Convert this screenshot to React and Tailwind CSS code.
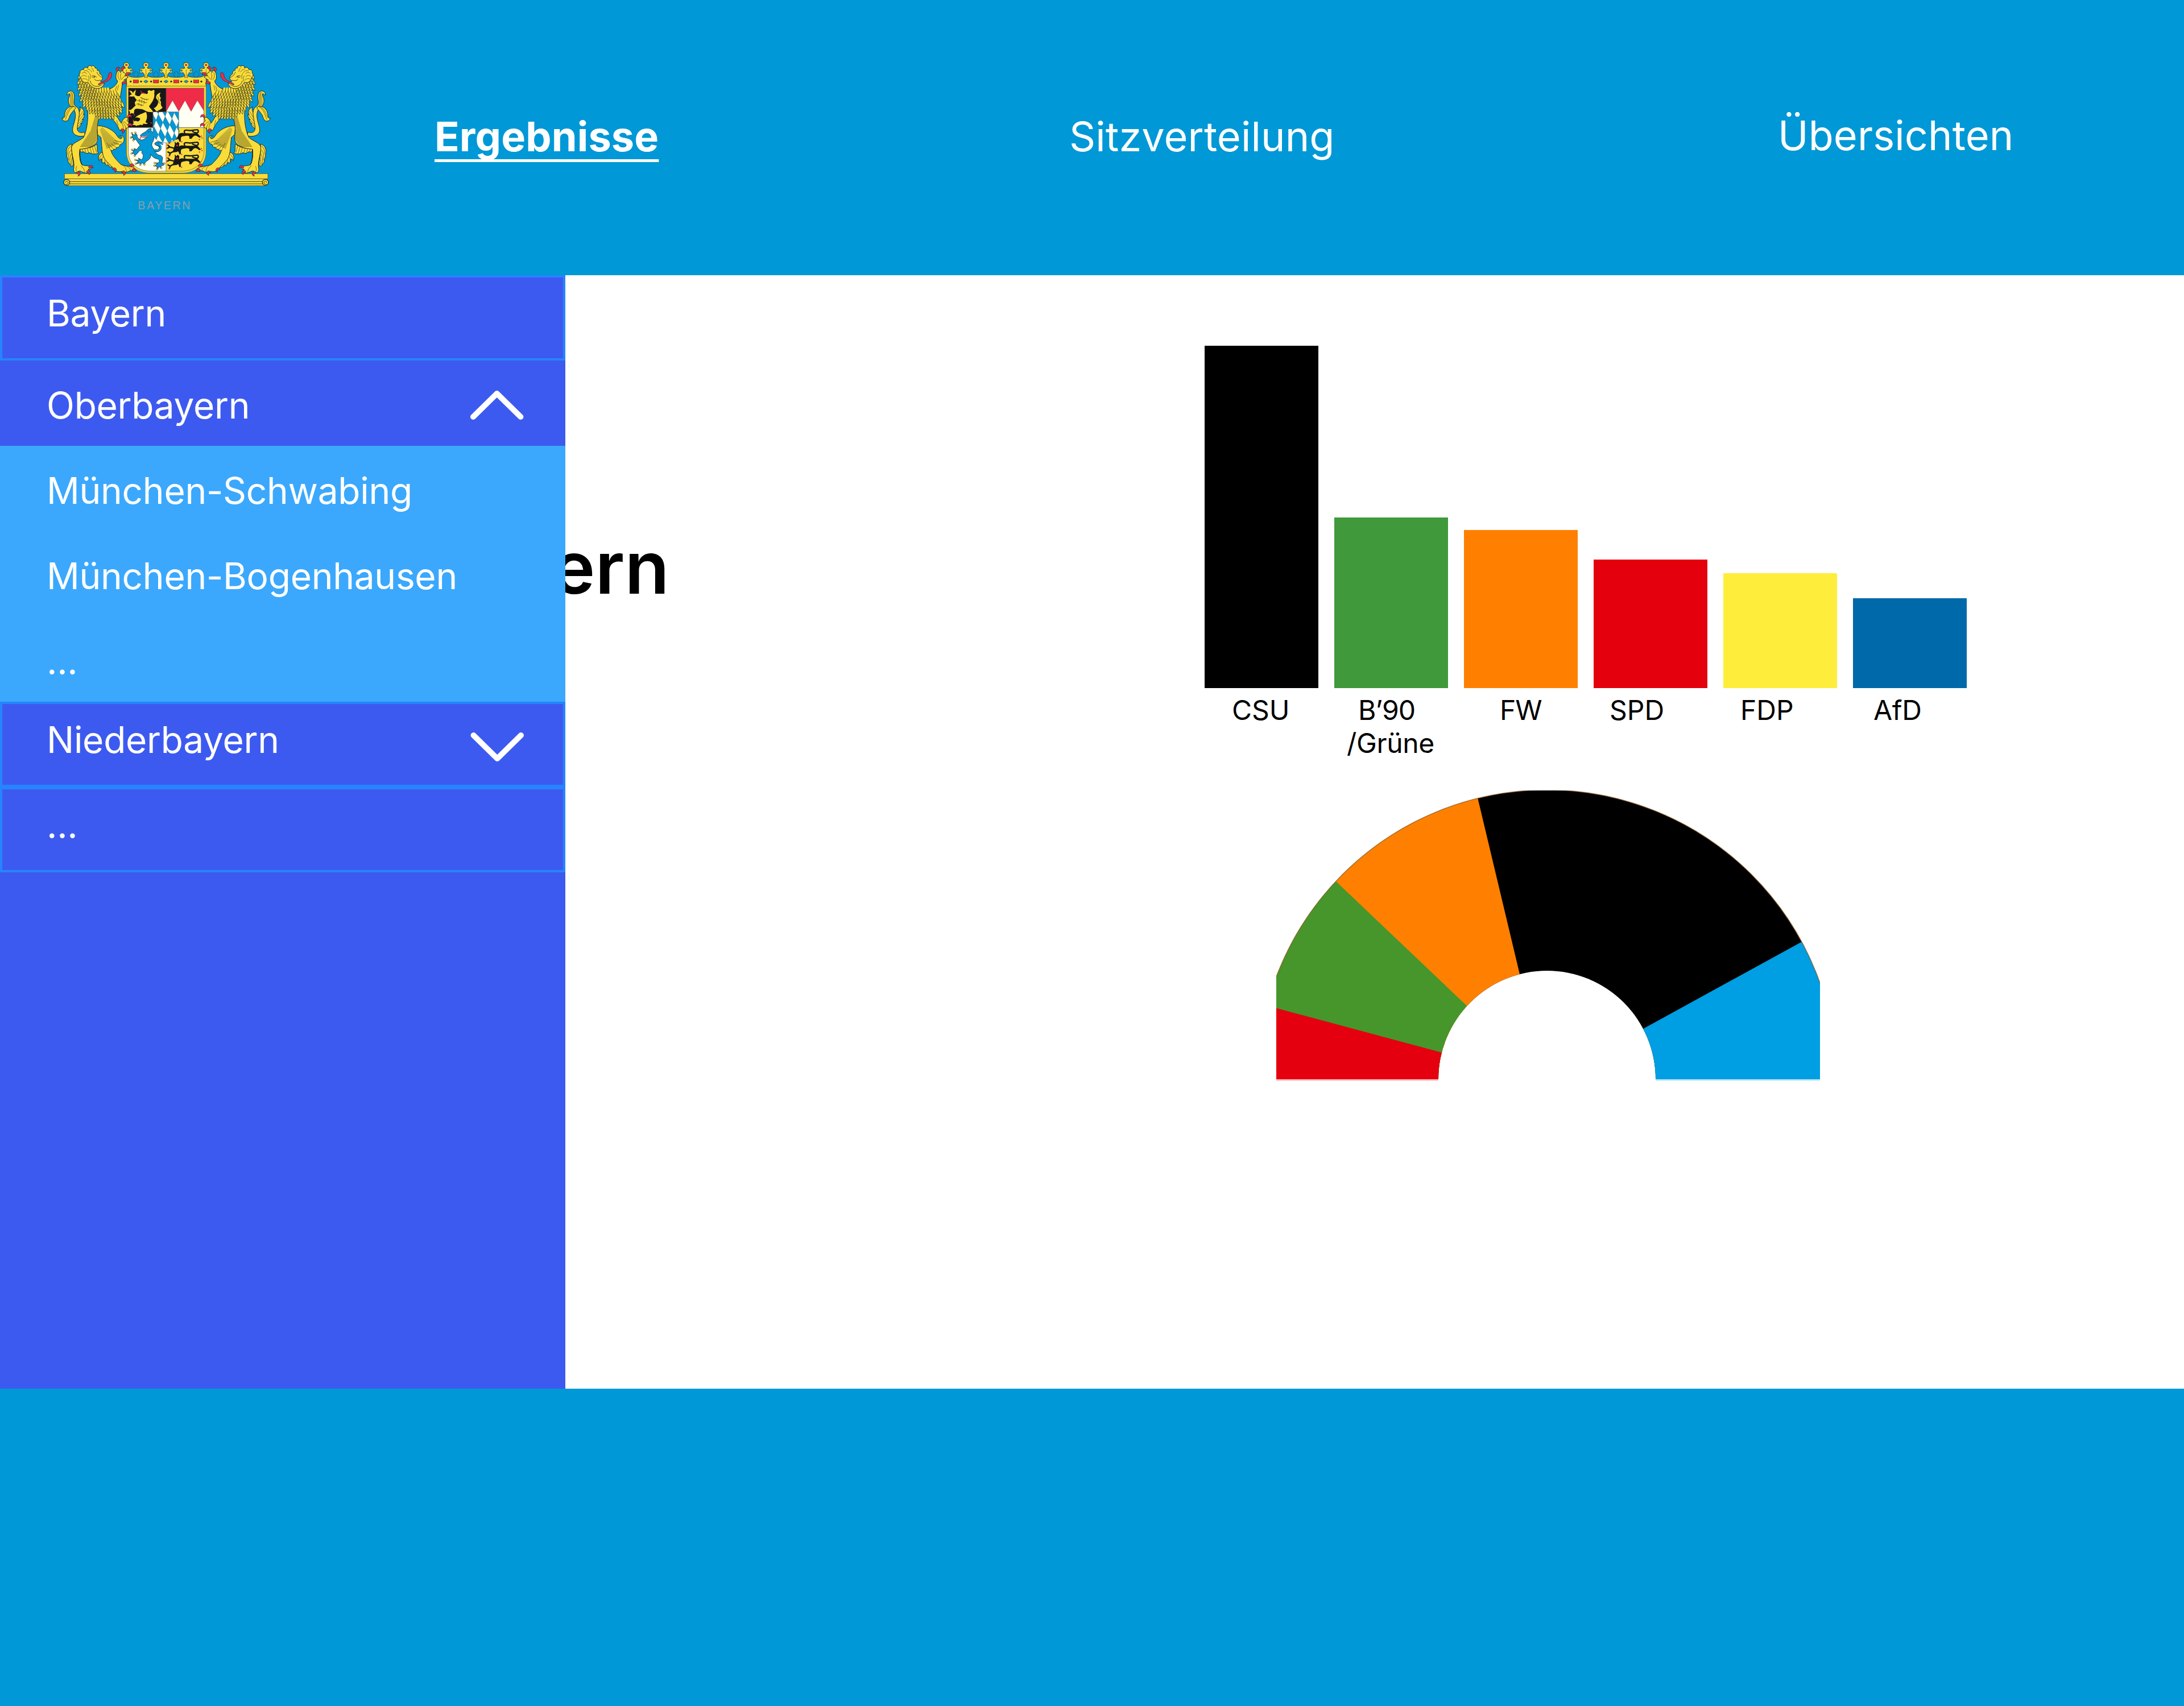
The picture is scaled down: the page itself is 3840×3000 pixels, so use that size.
import React from "react";

const GOLD = "#f9dc3a";
const INK = "#23271f";
const RED = "#f02b48";
const BLUE = "#0098d6";
const IVORY = "#fffff4";

const lerpTable = (table, y) => {
  for (let i = 1; i < table.length; i++) {
    const [y0, v0] = table[i - 1];
    const [y1, v1] = table[i];
    if (y <= y1) return v0 + ((v1 - v0) * (y - y0)) / (y1 - y0);
  }
  return table[table.length - 1][1];
};

const MANE_LEFT = [[70, 114], [120, 108], [160, 114], [200, 122], [240, 142], [262, 172], [290, 212]];
const MANE_RIGHT = [[70, 130], [120, 165], [138, 195], [150, 248], [170, 302], [200, 318], [235, 330], [262, 318], [290, 285]];

const TUFTS = (() => {
  const out = [];
  let row = 0;
  for (let y = 288; y >= 66; y -= 15) {
    const l = lerpTable(MANE_LEFT, y);
    const r = lerpTable(MANE_RIGHT, y);
    for (let x = l + (row % 2) * 7; x <= r; x += 13.5) {
      const t = (x - 110) / 220;
      out.push([x, y, 38 - t * 68]);
    }
    row++;
  }
  return out;
})();

function Claw({ x, y, a }) {
  return (
    <path
      transform={`translate(${x} ${y}) rotate(${a})`}
      d="M-7 0 C-7 -9 0 -13 10 -10 C14 -8 16 -3 16 3 C10 -3 4 -2 1 5 C-3 7 -7 5 -7 0Z"
      fill={RED}
      stroke={INK}
      strokeWidth="2"
    />
  );
}

function Supporter() {
  const body = { fill: GOLD, stroke: INK, strokeWidth: 3, strokeLinejoin: "round" };
  const line = { fill: "none", stroke: INK, strokeWidth: 1.8, strokeLinecap: "round" };
  return (
    <g transform="translate(45 45)">
      <path {...body} d="M106 248 C128 262 132 275 124 290 L131 288 C129 305 123 311 117 316 L125 315 C119 330 111 335 109 338 L115 338 C109 352 99 360 90 364 C86 340 96 310 102 282 C106 268 112 262 106 248Z" />
      <path {...line} d="M122 272 L101 306 M125 292 L98 324 M119 316 L94 342 M110 338 L91 356" />
      <path {...body} d="M132 402 C100 408 72 400 68 375 C66 350 84 325 83 290 C81 270 75 258 62 250 C45 238 42 215 50 195 C54 185 56 182 50 180 C44 180 44 188 38 186 C37 170 52 162 64 166 C78 172 80 195 76 215 C74 235 78 242 88 248 C104 258 106 280 100 310 C96 340 88 360 96 376 C102 386 118 386 132 382Z" />
      <path {...body} d="M78 248 C48 240 30 262 26 285 C24 300 24 312 12 308 C14 320 28 328 40 322 C52 312 50 295 60 285 C68 272 80 262 84 254Z" />
      <path {...line} d="M70 250 C46 262 42 290 30 316 M64 250 C40 260 36 285 26 305 M58 172 C70 190 58 215 66 246 M64 172 C74 195 66 220 72 244 M52 178 C62 200 52 220 58 240" />

      <path {...body} d="M225 488 C205 495 200 515 208 532 C212 528 216 520 222 525 C218 540 224 548 230 545 C236 535 238 545 240 552 C248 562 255 550 258 558 C262 566 268 570 276 566 C262 545 235 520 225 488Z" />
      <path {...line} d="M222 500 C214 508 210 518 210 526 M228 512 C222 520 222 532 226 542 M238 526 C236 535 240 545 244 552 M250 542 C250 550 258 558 264 564" />
      <path {...body} d="M196 348 C245 348 285 372 305 405 C315 420 330 420 328 408 C324 400 314 410 314 402 C322 396 340 402 340 420 C338 445 322 444 316 450 C320 462 304 462 298 464 C300 474 290 472 284 472 C284 482 276 478 270 478 C276 505 300 530 322 552 C345 566 385 556 400 578 C404 590 395 592 388 588 C378 584 368 586 362 590 C356 594 350 590 344 594 C340 606 326 602 328 590 C310 592 292 590 286 578 C280 565 250 545 235 520 C222 495 222 450 218 410 L200 395Z" />
      {Array.from({ length: 18 }, (_, i) => (
        <path key={i} {...line} d={`M${214 + i * 2} ${372 + i * 5.6} L${226 + i * 5} ${358 + i * 4.8}`} />
      ))}
      <path {...line} d="M250 440 C258 452 262 465 268 478 M262 448 L282 470 M272 444 L296 462 M282 436 L312 448 M292 426 L328 436 M330 555 C345 562 350 575 352 588 M350 562 C366 566 372 575 374 584" />

      <path {...body} d="M64 445 C40 450 30 475 38 500 C34 515 45 520 44 535 C46 550 55 545 58 560 C64 568 70 562 72 550 C70 520 60 490 64 445Z" />
      <path {...line} d="M58 456 C44 465 42 482 42 496 M60 476 C48 486 44 505 48 528 M62 496 C52 508 52 530 56 552 M66 515 C60 530 62 545 64 560" />
      <path {...body} d="M106 468 C106 485 112 490 122 486 C130 483 132 492 142 494 C152 494 155 488 160 492 C175 500 195 498 206 492 C192 485 202 470 196 445 C170 465 140 470 106 468Z" />
      <path {...line} d="M120 472 L120 484 M132 472 L138 488 M146 470 L152 490 M160 466 L168 492 M172 462 L182 494 M184 454 L194 490" />
      <path {...body} d="M146 255 C154 320 140 380 126 410 C100 432 66 438 62 462 C62 500 80 540 74 572 C70 590 80 600 92 594 C100 585 110 586 118 592 L138 598 C158 600 158 588 150 578 C160 578 168 580 164 568 C150 555 130 562 118 554 C106 540 102 500 106 472 C150 470 192 455 200 425 C202 395 190 370 206 310 L204 270Z" />
      {Array.from({ length: 27 }, (_, i) => {
        const y = 302 + i * 6;
        const right = i < 10 ? 204 - i * 1.1 : i < 20 ? 193 + (i - 10) * 0.6 : 199 - (i - 20) * 5;
        const left = i < 12 ? 186 - i * 1.8 : 165 - (i - 12) * 4;
        return <path key={i} {...line} d={`M${left} ${y} L${right} ${y}`} />;
      })}
      <path {...line} strokeWidth="4" d="M107 474 C104 500 107 538 118 554" />
      <path {...line} d="M90 562 C84 575 86 585 90 592 M112 560 C124 566 128 580 132 590" />

      <path {...body} d="M270 305 C290 325 306 345 314 370 C322 378 330 368 338 368 C346 378 350 370 348 360 C362 364 366 352 358 344 C368 340 366 326 354 322 C362 314 362 302 350 304 C338 308 330 320 325 335 C312 320 302 296 292 285Z" />
      <path {...line} d="M328 336 C334 345 336 355 336 366 M332 332 C342 338 346 348 348 358 M336 326 C346 330 352 336 356 342 M300 320 L308 345" />
      <path {...body} d="M250 160 C280 150 300 135 306 112 C294 105 292 78 306 58 C314 54 318 62 320 68 C325 56 336 56 336 68 C347 68 350 78 342 86 C356 82 364 90 354 98 L338 108 C352 106 350 118 330 118 C330 150 318 190 318 215Z" />
      <path {...line} d="M310 68 C304 85 308 96 316 106 M324 72 C318 85 320 96 324 104 M340 88 L326 104 M300 140 L292 165 M310 135 L304 160" />

      {TUFTS.map(([x, y, a], i) => (
        <path
          key={i}
          transform={`translate(${x} ${y}) rotate(${a})`}
          d="M-7 -6 C-9 8 -6 20 2 30 C7 20 9 6 6 -6"
          fill={GOLD}
          stroke={INK}
          strokeWidth="2"
        />
      ))}

      <path {...body} d="M112 95 C98 88 104 72 108 70 C104 58 116 50 126 52 C126 40 142 38 148 44 C148 28 164 28 168 36 C172 26 188 34 186 44 C196 42 198 52 198 56 C208 56 212 66 211 74 C220 80 228 90 226 100 C224 108 216 108 214 112 C220 120 228 124 235 124 C232 145 208 156 190 152 C170 148 156 132 148 118 C132 128 112 112 112 95Z" />
      <path {...line} strokeWidth="2.6" d="M160 112 C164 132 186 146 206 140 C216 136 224 132 228 126 M170 86 C178 80 188 88 194 92 M196 66 C202 78 206 84 222 94 M184 104 C192 112 202 112 212 108 M172 92 L184 94" />
      <path {...line} d="M118 72 C126 64 138 66 142 74 M114 88 C124 80 136 82 142 90 M128 60 C140 54 150 60 154 68 M148 50 C158 50 166 56 168 64 M168 42 C174 48 178 54 178 62 M120 102 C130 98 140 100 148 108 M150 84 C156 92 156 102 152 112 M158 72 C164 80 164 92 162 100" />
      <circle cx="183" cy="89" r="2.6" fill={INK} />
      <path d="M202 130 C222 110 244 116 256 90 C256 74 262 66 270 67 C278 72 274 92 266 102 C250 120 228 118 208 134Z" fill={RED} stroke={INK} strokeWidth="2" />

      <Claw x={305} y={54} a={-50} />
      <Claw x={332} y={50} a={-30} />
      <Claw x={356} y={78} a={0} />
      <Claw x={338} y={124} a={10} />
      <Claw x={364} y={300} a={5} />
      <Claw x={366} y={345} a={20} />
      <Claw x={328} y={372} a={70} />
      <Claw x={96} y={598} a={80} />
      <Claw x={148} y={592} a={55} />
      <Claw x={160} y={568} a={5} />
      <Claw x={286} y={578} a={60} />
      <Claw x={335} y={594} a={75} />
      <Claw x={376} y={560} a={5} />
      <Claw x={388} y={584} a={15} />
    </g>
  );
}

function CrownCross({ x }) {
  return (
    <g stroke={INK} strokeWidth="2.5">
      <path
        fill={GOLD}
        d={`M${x - 7} 142 C${x - 7} 122 ${x - 12} 116 ${x - 18} 112 C${x - 28} 120 ${x - 38} 108 ${x - 32} 101 C${x - 36} 92 ${x - 22} 86 ${x - 18} 92 L${x - 8} 90 C${x - 7} 86 ${x - 8} 84 ${x - 10} 82 C${x - 20} 76 ${x - 12} 58 ${x} 60 C${x + 12} 58 ${x + 20} 76 ${x + 10} 82 C${x + 8} 84 ${x + 7} 86 ${x + 8} 90 L${x + 18} 92 C${x + 22} 86 ${x + 36} 92 ${x + 32} 101 C${x + 38} 108 ${x + 28} 120 ${x + 18} 112 C${x + 12} 116 ${x + 7} 122 ${x + 7} 142Z`}
      />
      <rect x={x - 5} y="69" width="10" height="8" fill={RED} strokeWidth="1" />
      <path d={`M${x - 25} 95 l7 7 l-7 7 l-7 -7Z M${x + 25} 95 l7 7 l-7 7 l-7 -7Z`} fill={BLUE} strokeWidth="1" />
      <path d={`M${x} 96 V142`} strokeWidth="1.5" />
    </g>
  );
}

function Crown() {
  return (
    <g>
      {[447, 553, 660, 765].map((x) => (
        <path
          key={x}
          fill={BLUE}
          stroke="#175f86"
          strokeWidth="2.5"
          d={`M${x - 8} 136 C${x - 6} 130 ${x - 8} 128 ${x - 12} 130 C${x - 22} 126 ${x - 14} 112 ${x - 8} 118 C${x - 12} 104 ${x + 12} 104 ${x + 8} 118 C${x + 14} 112 ${x + 22} 126 ${x + 12} 130 C${x + 8} 128 ${x + 6} 130 ${x + 8} 136`}
        />
      ))}
      <path
        d="M397 186 V112 C402 134 420 138 447 138 C470 138 492 136 500 122 C508 136 530 138 553 138 C576 138 598 136 606 122 C614 136 636 138 660 138 C684 138 704 136 712 122 C720 136 742 138 765 138 C792 138 812 134 817 112 V186Z"
        fill={GOLD}
        stroke={INK}
        strokeWidth="2.5"
      />
      {[397, 500, 606, 712, 817].map((x) => (
        <CrownCross key={x} x={x} />
      ))}
      <rect x="399" y="141" width="416" height="42" fill={GOLD} />
      {[447, 553, 660, 765].map((x) => (
        <rect key={x} x={x - 14} y="152" width="28" height="16" fill={RED} stroke={INK} strokeWidth="1.5" />
      ))}
      {[500, 606, 712].map((x) => (
        <path key={x} d={`M${x - 12} 160 L${x} 152 L${x + 12} 160 L${x} 168Z`} fill={BLUE} stroke={INK} strokeWidth="1.5" />
      ))}
      {[419, 474, 527, 580, 633, 686, 739, 792].map((x) => (
        <circle key={x} cx={x} cy="160" r="5" fill={INK} />
      ))}
    </g>
  );
}

function Lozenges() {
  const cells = [];
  for (let i = -5; i <= 6; i++) {
    for (let j = -5; j <= 6; j++) {
      const x = 553 + i * 36 + j * 12;
      const y = 364 + i * 12 + j * 76;
      cells.push(<path key={`${i},${j}`} d={`M${x} ${y} l12 -32 l24 44 l-12 32Z`} fill={BLUE} stroke={INK} strokeWidth="0.8" />);
    }
  }
  return <>{cells}</>;
}

function Leopard({ y }) {
  return (
    <g transform={`translate(0 ${y})`}>
      <path
        fill="#181818"
        d="M652 -2 L660 8 L668 0 L676 8 L674 24 C680 20 690 18 700 20 C730 22 748 22 770 20 C778 28 782 32 790 42 L780 44 C772 36 764 32 756 34 C748 38 744 44 740 50 L728 50 C732 40 728 34 718 34 C706 34 700 36 690 38 C682 44 684 50 684 64 L676 66 C674 52 668 46 664 54 L642 56 C644 36 650 24 652 16Z"
      />
      <path
        fill="none"
        stroke="#181818"
        strokeWidth="7"
        strokeLinecap="round"
        d="M704 18 C696 2 712 4 728 6 C750 10 778 -8 776 12 C774 24 756 18 746 12 M648 34 L626 28 L616 18 M626 28 L612 34 M646 50 L628 60 L616 54 M628 60 L624 72"
      />
      <g fill={RED}>
        <circle cx="664" cy="19" r="4.5" />
        <circle cx="613" cy="17" r="3.5" />
        <circle cx="611" cy="36" r="3.5" />
        <circle cx="622" cy="74" r="3.5" />
        <circle cx="688" cy="66" r="3.5" />
        <circle cx="792" cy="36" r="3.5" />
        <circle cx="796" cy="46" r="3.5" />
        <circle cx="782" cy="54" r="3.5" />
      </g>
    </g>
  );
}

function Shield() {
  return (
    <g>
      <defs>
        <clipPath id="field">
          <path d="M407 195 H806 V530 C806 595 752 633 690 633 H524 C460 633 407 595 407 530Z" />
        </clipPath>
        <clipPath id="heart">
          <path d="M537 320 H673 V430 C670 465 640 484 606 484 C570 484 540 465 537 430Z" />
        </clipPath>
      </defs>
      <path d="M397 184 H817 V530 C817 602 760 643 690 643 H524 C450 643 397 602 397 530Z" fill={GOLD} stroke="#6d6a2a" strokeWidth="2.5" />
      <g clipPath="url(#field)">
        <rect x="407" y="195" width="199" height="208" fill="#181818" />
        <rect x="606" y="195" width="200" height="208" fill={RED} />
        <path d="M606 320 L640 260 L673 318 L706 260 L738 318 L771 260 L806 316 V403 H606Z" fill={IVORY} stroke="#7a7468" strokeWidth="1.5" />
        <rect x="407" y="403" width="199" height="232" fill={IVORY} />
        <rect x="606" y="403" width="200" height="232" fill={GOLD} />

        <path
          fill={GOLD}
          d="M508 212 C514 204 522 206 526 210 L542 204 C548 212 542 218 544 226 C546 242 540 250 536 262 C528 276 520 284 516 292 C524 304 534 310 538 322 L512 320 C500 318 490 308 478 306 C462 306 450 300 440 308 C436 316 440 322 434 330 L424 326 L414 332 L416 320 L408 312 L422 308 C430 302 436 294 446 286 C440 280 444 276 440 270 C446 268 444 262 452 258 C444 250 442 246 436 238 C426 242 418 236 412 240 C414 230 420 230 426 228 C420 222 418 214 412 210 C420 206 428 212 432 222 C434 212 440 208 446 206 C446 216 440 226 444 232 C454 238 460 238 468 236 C472 224 486 216 494 222 C506 230 514 224 508 212Z"
        />
        <path
          fill={GOLD}
          d="M500 320 C508 338 506 356 500 368 C494 374 500 378 510 380 C500 388 490 380 484 384 C488 392 474 390 468 388 C462 396 452 386 450 396 C444 388 436 392 430 388 C436 382 436 376 430 370 C440 372 442 366 450 368 C458 374 466 368 470 356 C462 350 452 346 442 354 C452 336 478 332 500 320Z"
        />
        <path fill={GOLD} d="M556 318 C570 310 582 306 588 296 C580 292 576 278 580 268 C574 264 572 252 580 246 C570 242 570 226 578 218 C562 222 550 234 554 250 C562 258 568 266 562 280 C556 292 550 300 540 300 C546 304 550 312 556 318Z" />
        <path fill="none" stroke="#181818" strokeWidth="2" d="M454 262 l14 -6 l-4 10 l16 -6 l-4 10 l16 -6 l-4 10 l16 -4 M450 280 l14 -4 l-4 8 l16 -4 l-4 8 l16 -4 M470 244 l10 2 l-2 6 l12 -2 l0 6 l12 -4 l0 6 l12 -6 M560 240 C572 250 562 262 572 276 M500 216 l10 4" />
        <path fill="none" stroke={RED} strokeWidth="4" d="M473 208 C474 224 484 222 496 224 M410 212 l8 -4 M442 204 l6 2 M408 238 l8 -2 M438 366 l-8 -2 M432 384 l-6 4 M524 376 l8 4 M410 312 l-4 -4 M436 332 l4 8" />

        <path
          fill={BLUE}
          stroke={INK}
          strokeWidth="2.5"
          d="M470 446 C474 436 490 430 502 422 C506 414 514 408 528 408 L526 420 C532 424 540 428 540 436 C546 450 542 466 536 478 C526 492 532 504 540 514 C546 526 552 540 566 548 C582 548 592 560 586 574 L584 590 L598 592 L590 604 L582 600 L578 616 L570 608 L560 624 L558 608 L544 604 L560 596 L550 590 L568 588 C572 578 570 570 558 568 C544 566 534 556 524 544 C528 560 518 572 504 580 C496 584 496 590 490 598 L480 588 L470 600 L468 590 L446 594 L460 582 L444 574 L464 574 L460 564 L476 572 C486 566 484 556 486 546 C478 542 476 534 480 526 C470 520 464 526 458 536 C450 540 448 550 440 552 L438 540 L424 540 L434 530 L424 520 L440 524 L436 514 L452 518 C458 510 462 502 470 498 C462 488 452 474 446 464 L432 470 L434 458 L418 456 L430 448 L424 432 L440 444 L444 430 L454 444 C450 454 462 462 472 468 C484 470 494 462 502 456 C492 452 480 454 470 446Z"
        />
        <path fill="none" stroke={INK} strokeWidth="13" d="M548 522 C564 532 580 516 574 502 C568 492 560 496 552 488 C556 482 572 480 584 486" />
        <path fill="none" stroke={BLUE} strokeWidth="9" d="M544 520 C564 532 582 516 576 500 C568 490 560 496 552 488 C558 480 576 484 590 492" />
        <path fill="none" stroke={IVORY} strokeWidth="3" d="M478 450 C492 456 504 452 512 440" />
        <path fill="none" stroke={RED} strokeWidth="3.5" d="M512 440 C504 456 488 460 476 452 C462 452 480 462 464 466" />
        <circle cx="514" cy="426" r="2.5" fill={INK} />
        <g fill={GOLD} stroke={INK} strokeWidth="1.5">
          {[[426, 432], [420, 456], [434, 470], [444, 430], [426, 520], [424, 540], [440, 552], [444, 574], [446, 594], [470, 600], [492, 598], [546, 590], [544, 604], [558, 622], [580, 616], [597, 592]].map(([x, y]) => (
            <circle key={`${x},${y}`} cx={x} cy={y} r="4.5" />
          ))}
        </g>

        <Leopard y={412} />
        <Leopard y={478} />
        <Leopard y={546} />
      </g>
      <g fill="none" stroke="#55554a" strokeWidth="2">
        <path d="M407 195 H806 V530 C806 595 752 633 690 633 H524 C460 633 407 595 407 530Z" />
        <path d="M606 195 V633 M407 403 H806" />
      </g>
      <g clipPath="url(#heart)">
        <rect x="537" y="320" width="136" height="164" fill={IVORY} />
        <Lozenges />
      </g>
      <path d="M537 320 H673 V430 C670 465 640 484 606 484 C570 484 540 465 537 430Z" fill="none" stroke="#5b6a70" strokeWidth="2" />
    </g>
  );
}

function CoatOfArms() {
  return (
    <svg viewBox="0 0 1200 900" className="ml-[90px] mt-[90px] h-[300px] w-[400px] shrink-0">
      <g stroke="#5c5a28" strokeWidth="2.5" fill={GOLD}>
        <rect x="80" y="673" width="1050" height="37" />
        <path d="M90 688 H1122 M92 700 H1120" stroke={INK} fill="none" />
        <rect x="70" y="646" width="1073" height="27" />
        {[82, 1130].map((x) => (
          <circle key={x} cx={x} cy="692" r="16" stroke={INK} strokeWidth="3.5" />
        ))}
        <path d="M76 694 C74 684 88 682 90 692 C90 700 82 704 76 702 M1136 694 C1138 684 1124 682 1122 692 C1122 700 1130 704 1136 702" stroke={INK} strokeWidth="3" fill="none" />
      </g>
      <Crown />
      <Shield />
      <Supporter />
      <g transform="translate(1213 0) scale(-1 1)">
        <Supporter />
      </g>
      <text x="457" y="833" fontSize="59" letterSpacing="7.6" fill="#8b9fa9" fontFamily="'Liberation Sans', sans-serif">
        BAYERN
      </text>
    </svg>
  );
}

function Chevron({ up }) {
  return (
    <svg viewBox="0 0 94 52" className={up ? "absolute left-[827px] top-[53px] h-[52px] w-[94px]" : "absolute left-[827px] top-[53px] h-[52px] w-[94px] rotate-180"}>
      <path d="M5 46 L46.7 5 L88.4 46" fill="none" stroke="#fff" strokeWidth="10" strokeLinecap="round" strokeLinejoin="round" />
    </svg>
  );
}

const rows = [
  { label: "Bayern", kind: "boxed" },
  { label: "Oberbayern", kind: "plain", chevron: "up" },
  { label: "München-Schwabing", kind: "sub" },
  { label: "München-Bogenhausen", kind: "sub" },
  { label: "...", kind: "sub" },
  { label: "Niederbayern", kind: "boxed", chevron: "down" },
  { label: "...", kind: "boxed" },
];

const rowClass = {
  boxed: "relative h-[150px] pl-[82px] pt-[28px] shadow-[inset_0_0_0_4px_#2684ff]",
  plain: "relative h-[150px] pl-[82px] pt-[40px]",
  sub: "relative h-[150px] bg-[#3ba8fd] pl-[82px] pt-[40px]",
};

const parties = [
  { id: "csu", text: "CSU", bar: "h-[602px] bg-black", label: "pl-[48px]" },
  { id: "gruene", text: "B’90", second: "/Grüne", bar: "h-[300px] bg-[#40993a]", label: "pl-[42px] tracking-[-1px]" },
  { id: "fw", text: "FW", bar: "h-[278px] bg-[#ff8000]", label: "pl-[63px] tracking-[-1px]" },
  { id: "spd", text: "SPD", bar: "h-[226px] bg-[#e4000c]", label: "pl-[28px]" },
  { id: "fdp", text: "FDP", bar: "h-[202px] bg-[#ffed3b]", label: "pl-[30px]" },
  { id: "afd", text: "AfD", bar: "h-[158px] bg-[#0069a9]", label: "pl-[36px] tracking-[-0.3px]" },
];

function SeatChart() {
  return (
    <svg viewBox="2244 1390 956 511" className="ml-[126px] h-[511px] w-[956px]">
      <defs>
        <clipPath id="ring">
          <path d="M2211 1898 A509 509 0 0 1 3229 1898 H2911 A191 191 0 0 0 2529 1898Z" />
        </clipPath>
      </defs>
      <g clipPath="url(#ring)">
        <rect x="2200" y="1380" width="1050" height="530" fill="#000" />
        <path d="M2200 1380 H2592.6 L2672.3 1714.3 L2720 1910 H2200Z" fill="#ff8000" />
        <path d="M2200 1410.7 L2350.6 1551.6 L2579.4 1769.1 L2720 1910 H2200Z" fill="#46962b" />
        <path d="M2200 1761 L2243.8 1772.8 L2533.6 1850.5 L2700 1910 H2200Z" fill="#e4000f" />
        <path d="M3300 1584 L3166.4 1657 L2889.8 1808.7 L2720 1901 V1910 H3300Z" fill="#009ee2" />
      </g>
      <path d="M2211 1898 A509 509 0 0 1 3229 1898" fill="none" stroke="#8a5a1c" strokeOpacity="0.6" strokeWidth="1.6" />
      <rect x="2244" y="1898" width="285" height="3" fill="#fbcdd0" />
      <rect x="2911" y="1898" width="289" height="3" fill="#cdecfa" />
    </svg>
  );
}

export default function App() {
  return (
    <div className="flex h-[3000px] w-[3840px] flex-col overflow-hidden bg-[#0098d6] font-['Inter',sans-serif]">
      <header className="flex h-[484px] shrink-0 text-[72px] text-white">
        <CoatOfArms />
        <nav className="flex whitespace-nowrap">
          <div className="ml-[274px] w-[1116px] leading-[480px]">
            <a className="font-bold tracking-[0.14px] underline decoration-[5px] underline-offset-[14px] [text-decoration-skip-ink:none]">Ergebnisse</a>
          </div>
          <div className="w-[1246px] leading-[480px] tracking-[0.1px]">Sitzverteilung</div>
          <div className="leading-[476px] tracking-[0.1px]">Übersichten</div>
        </nav>
      </header>

      <main className="flex h-[1958px] shrink-0 bg-white">
        <aside className="relative z-10 w-[994px] shrink-0 bg-[#3d5af0] text-[64px] leading-[77px] tracking-[-0.3px] text-white">
          {rows.map((row, i) => (
            <div key={i} className={rowClass[row.kind]}>
              {row.label}
              {row.chevron && <Chevron up={row.chevron === "up"} />}
            </div>
          ))}
        </aside>

        <h1 className="-ml-[252px] w-[1376px] pt-[436px] text-[128px] font-semibold leading-[155px] text-black">Bayern</h1>

        <section className="pt-[124px] text-[48px] leading-[58px] text-black">
          <div className="flex h-[602px] items-end gap-[28px]">
            {parties.map((p) => (
              <div key={p.id} className={`w-[200px] ${p.bar}`} />
            ))}
          </div>
          <div className="mt-[10px] flex h-[170px] gap-[28px]">
            {parties.map((p) => (
              <div key={p.id} className={`w-[200px] whitespace-nowrap ${p.label}`}>
                {p.text}
                {p.second && <div className="-ml-[20px] tracking-[-0.35px]">{p.second}</div>}
              </div>
            ))}
          </div>
          <SeatChart />
        </section>
      </main>
    </div>
  );
}
